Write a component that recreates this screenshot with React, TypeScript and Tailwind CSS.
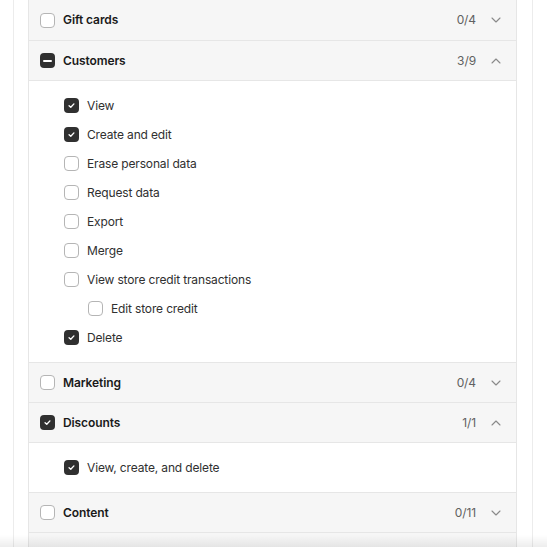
import React from "react";

type State = "none" | "checked" | "indeterminate";

function Box({ state }: { state: State }) {
  if (state === "none") {
    return (
      <span className="block w-[15px] h-[15px] rounded-[4px] border border-[#b5b5b5] bg-white shrink-0" />
    );
  }
  return (
    <span className="flex items-center justify-center w-[15px] h-[15px] rounded-[4px] bg-[#303030] shrink-0">
      {state === "checked" ? (
        <svg width="9" height="9" viewBox="0 0 10 10" fill="none">
          <path d="M2.3 5.2 L4.2 7 L7.7 3.2" stroke="white" strokeWidth="1.5" strokeLinecap="round" strokeLinejoin="round" />
        </svg>
      ) : (
        <span className="block w-[9px] h-[2px] rounded bg-white" />
      )}
    </span>
  );
}

function Chevron({ up }: { up?: boolean }) {
  return (
    <svg width="10" height="6" viewBox="0 0 10 6" fill="none" className="shrink-0">
      <path
        d={up ? "M1 5 L5 1 L9 5" : "M1 1 L5 5 L9 1"}
        stroke="#8a8a8a"
        strokeWidth="1.1"
        strokeLinecap="round"
        strokeLinejoin="round"
      />
    </svg>
  );
}

function Header({ label, state, count, open, first }: { label: string; state: State; count: string; open?: boolean; first?: boolean }) {
  return (
    <div className={`flex items-center h-[40px] bg-[#f6f6f6] pl-[11px] pr-[15px] ${first ? "" : "border-t border-[#e6e6e6]"}`}>
      <Box state={state} />
      <span className="ml-[8px] text-[12px] tracking-[-0.1px] font-semibold text-[#1a1a1a] flex-1">{label}</span>
      <span className="text-[12px] tracking-[-0.1px] text-[#616161]">{count}</span>
      <span className="ml-[15px] flex items-center">
        <Chevron up={open} />
      </span>
    </div>
  );
}

function Item({ label, checked, indent }: { label: string; checked?: boolean; indent?: boolean }) {
  return (
    <div className={`flex items-center h-[29px] ${indent ? "pl-[59px]" : "pl-[35px]"}`}>
      <Box state={checked ? "checked" : "none"} />
      <span className="ml-[8px] text-[12px] tracking-[-0.15px] text-[#303030]">{label}</span>
    </div>
  );
}

export default function App() {
  return (
    <div className="relative w-[547px] h-[547px] overflow-hidden bg-white" style={{ fontFamily: "Inter, 'Noto Sans', sans-serif" }}>
      <div className="ml-[13px] w-[520px] h-[560px] border-x border-[#ececec] pl-[14px] pr-[15px]">
        <div className="border-x border-[#e6e6e6] bg-white">
          <Header label="Gift cards" state="none" count="0/4" first />
          <Header label="Customers" state="indeterminate" count="3/9" open />
          <div className="border-t border-[#e6e6e6] py-[10px]">
            <Item label="View" checked />
            <Item label="Create and edit" checked />
            <Item label="Erase personal data" />
            <Item label="Request data" />
            <Item label="Export" />
            <Item label="Merge" />
            <Item label="View store credit transactions" />
            <Item label="Edit store credit" indent />
            <Item label="Delete" checked />
          </div>
          <Header label="Marketing" state="none" count="0/4" />
          <Header label="Discounts" state="checked" count="1/1" open />
          <div className="border-t border-[#e6e6e6] py-[10px]">
            <Item label="View, create, and delete" checked />
          </div>
          <Header label="Content" state="none" count="0/11" />
          <div className="h-[40px] bg-[#f6f6f6] border-t border-[#e6e6e6]" />
        </div>
      </div>
      <div className="absolute left-0 right-0 bottom-0 h-[12px] bg-gradient-to-b from-[rgba(0,0,0,0)] to-[rgba(0,0,0,0.07)]" />
    </div>
  );
}
